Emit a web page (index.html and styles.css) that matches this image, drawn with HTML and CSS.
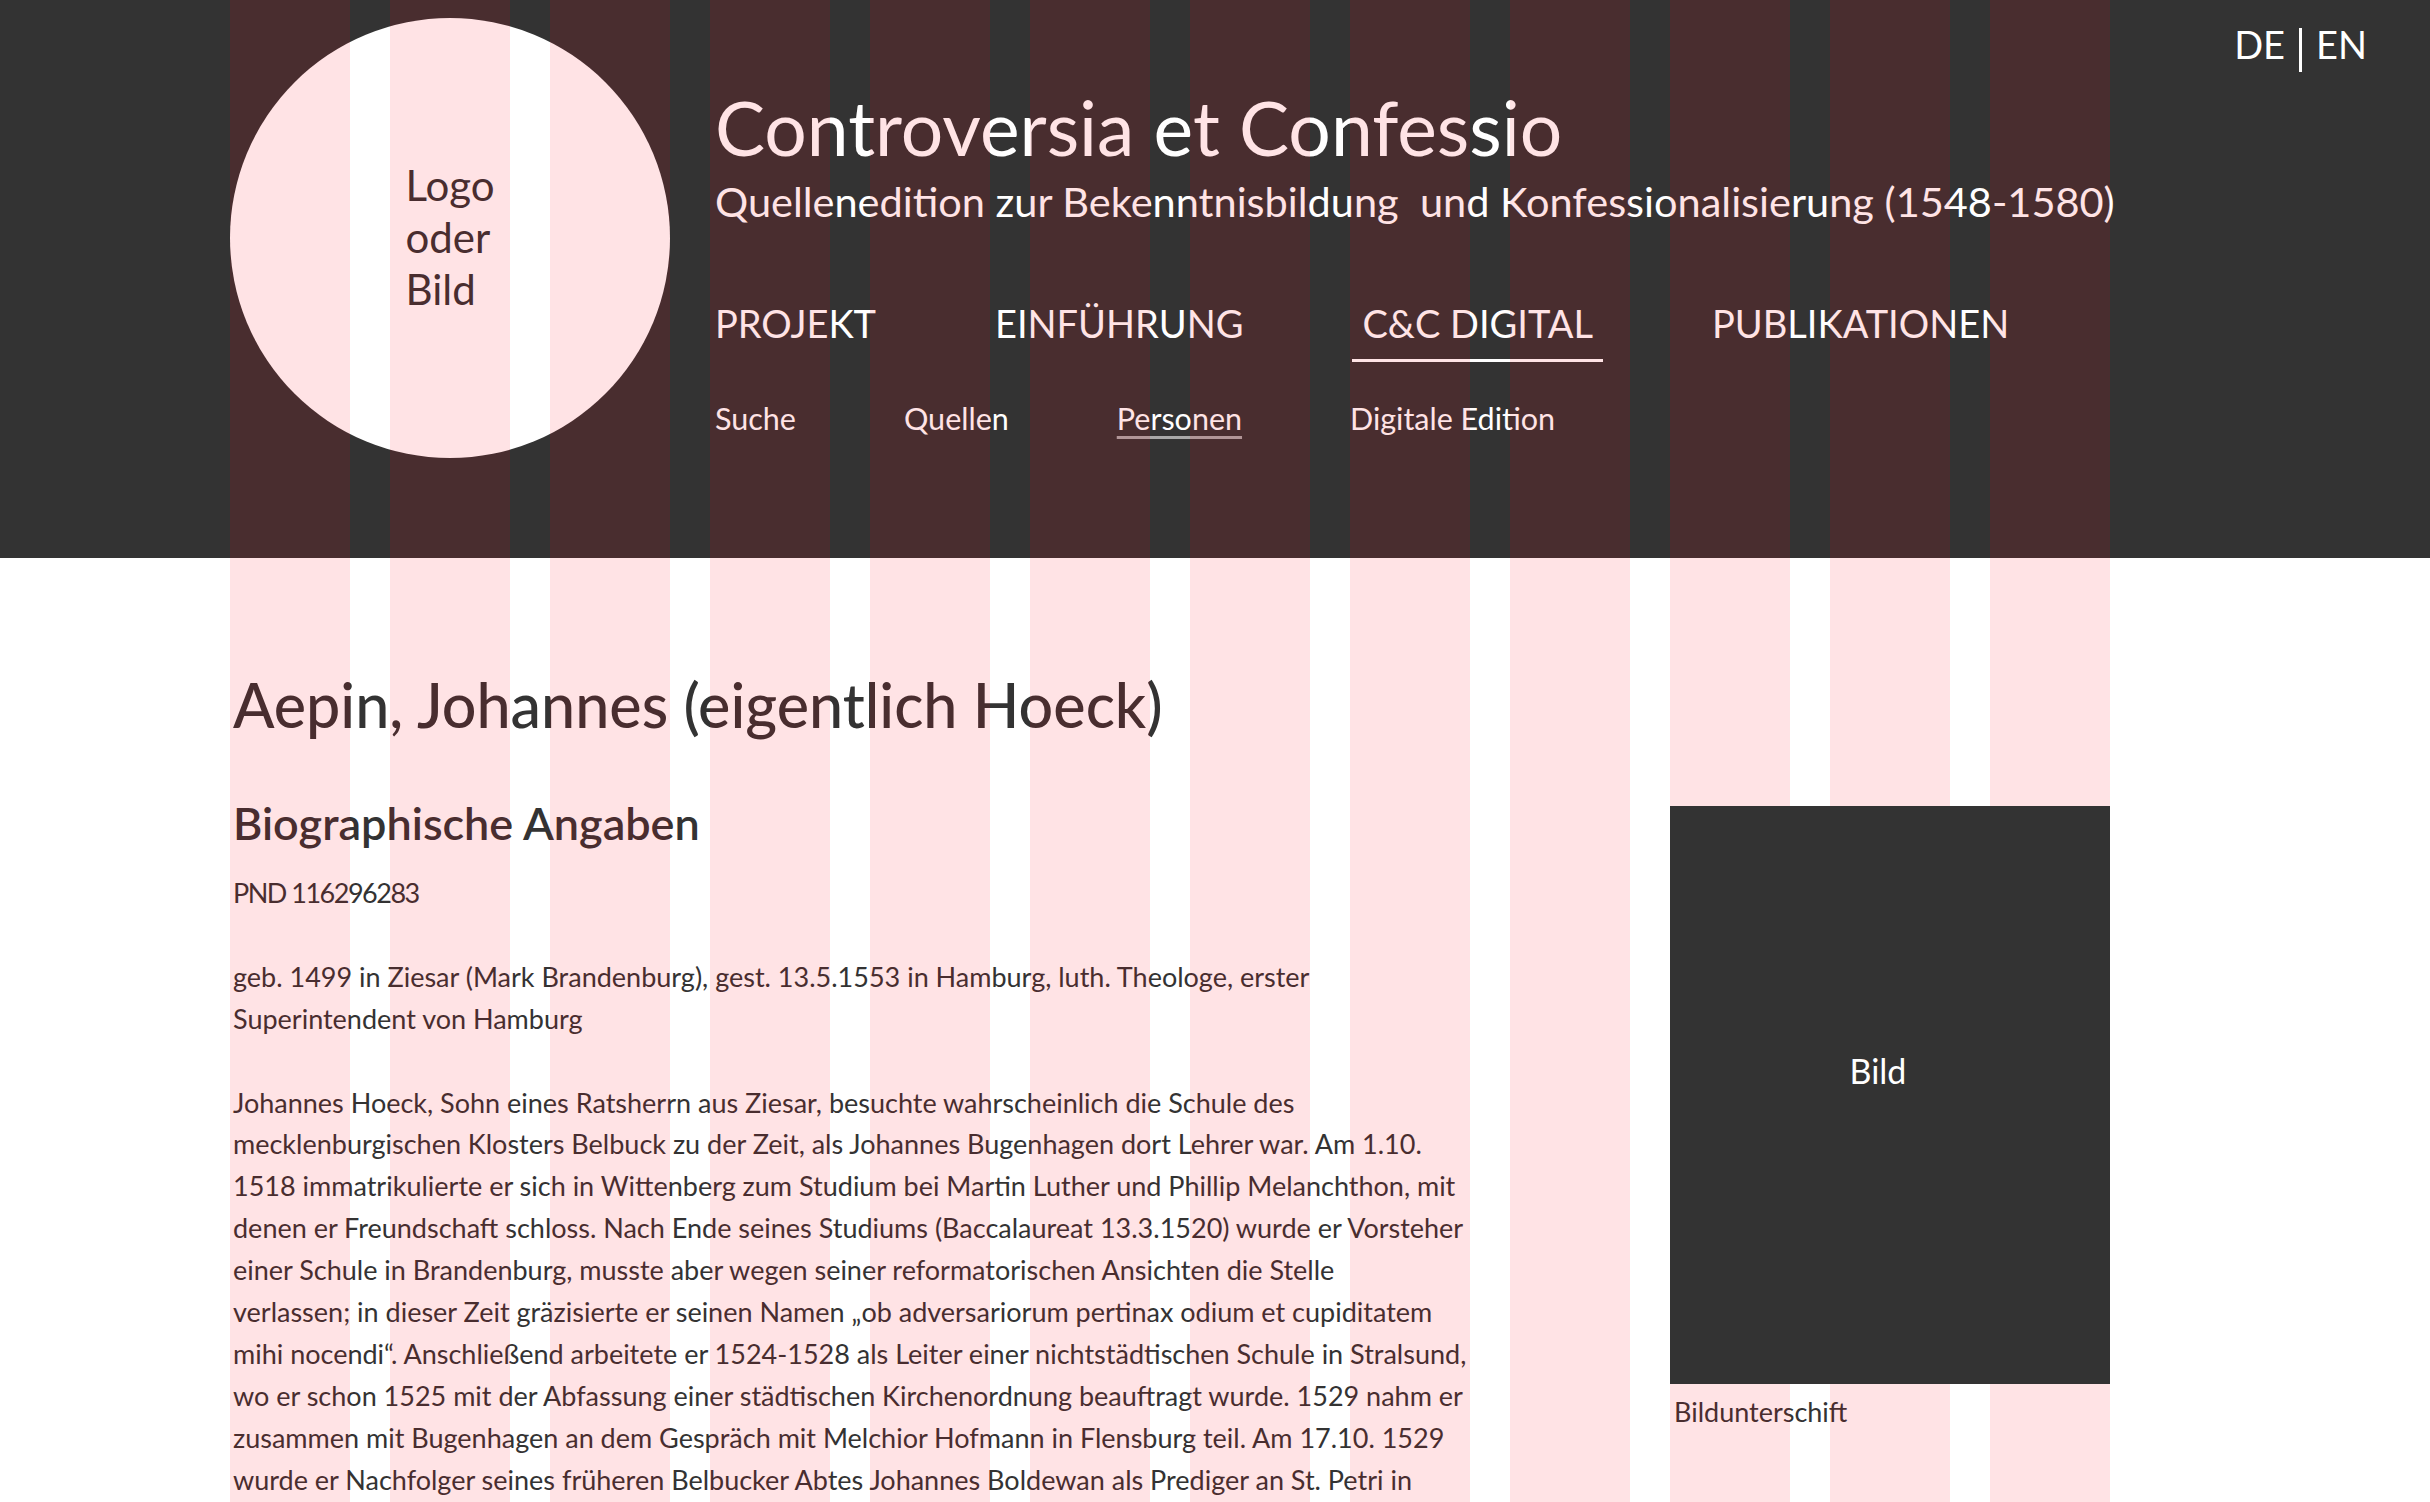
FILE: index.html
```html
<!DOCTYPE html>
<html lang="de">
<head>
<meta charset="utf-8">
<title>Aepin, Johannes – Controversia et Confessio</title>
<link rel="stylesheet" href="styles.css">
</head>
<body>
<div class="page">
  <header class="site-header">
    <div class="header-grid">
      <div class="logo"><span class="logo-text">Logo<br>oder<br>Bild</span></div>
      <div class="branding">
        <h1 class="site-title">Controversia et Confessio</h1>
        <p class="site-subtitle">Quellenedition zur Bekenntnisbildung&nbsp; und Konfessionalisierung (1548-1580)</p>
        <nav>
          <ul class="main-nav">
            <li><a href="#">PROJEKT</a></li>
            <li><a href="#">EINFÜHRUNG</a></li>
            <li><a href="#" class="active">C&amp;C DIGITAL</a></li>
            <li><a href="#">PUBLIKATIONEN</a></li>
          </ul>
          <ul class="sub-nav">
            <li><a href="#">Suche</a></li>
            <li><a href="#">Quellen</a></li>
            <li><a href="#" class="active">Personen</a></li>
            <li><a href="#">Digitale Edition</a></li>
          </ul>
        </nav>
      </div>
    </div>
    <div class="lang"><a href="#">DE</a><span class="lang-sep"></span><a href="#">EN</a></div>
  </header>

  <main class="content">
    <h1 class="person-name">Aepin, Johannes (eigentlich Hoeck)</h1>
    <article class="bio">
      <h2 class="section-title">Biographische Angaben</h2>
      <p class="pnd">PND 116296283</p>
      <p>geb. 1499 in Ziesar (Mark Brandenburg), gest. 13.5.1553 in Hamburg, luth. Theologe, erster<br>Superintendent von Hamburg</p>
      <p>Johannes Hoeck, Sohn eines Ratsherrn aus Ziesar, besuchte wahrscheinlich die Schule des<br>mecklenburgischen Klosters Belbuck zu der Zeit, als Johannes Bugenhagen dort Lehrer war. Am 1.10.<br>1518 immatrikulierte er sich in Wittenberg zum Studium bei Martin Luther und Phillip Melanchthon, mit<br>denen er Freundschaft schloss. Nach Ende seines Studiums (Baccalaureat 13.3.1520) wurde er Vorsteher<br>einer Schule in Brandenburg, musste aber wegen seiner reformatorischen Ansichten die Stelle<br>verlassen; in dieser Zeit gräzisierte er seinen Namen „ob adversariorum pertinax odium et cupiditatem<br>mihi nocendi“. Anschließend arbeitete er 1524-1528 als Leiter einer nichtstädtischen Schule in Stralsund,<br>wo er schon 1525 mit der Abfassung einer städtischen Kirchenordnung beauftragt wurde. 1529 nahm er<br>zusammen mit Bugenhagen an dem Gespräch mit Melchior Hofmann in Flensburg teil. Am 17.10. 1529<br>wurde er Nachfolger seines früheren Belbucker Abtes Johannes Boldewan als Prediger an St. Petri in<br>Hamburg.</p>
    </article>
    <aside class="figure">
      <div class="figure-box">Bild</div>
      <div class="figure-caption">Bildunterschift</div>
    </aside>
  </main>

  <div class="grid-overlay" aria-hidden="true">
    <div class="grid-col"></div><div class="grid-col"></div><div class="grid-col"></div>
    <div class="grid-col"></div><div class="grid-col"></div><div class="grid-col"></div>
    <div class="grid-col"></div><div class="grid-col"></div><div class="grid-col"></div>
    <div class="grid-col"></div><div class="grid-col"></div><div class="grid-col"></div>
  </div>
</div>
</body>
</html>
```

FILE: styles.css
```css
* { box-sizing: border-box; }

html, body {
  margin: 0;
  padding: 0;
}

body {
  font-family: Lato, "Open Sans", sans-serif;
  color: #333;
  background: #fff;
}

a {
  color: inherit;
  text-decoration: none;
}

ul {
  list-style: none;
  margin: 0;
  padding: 0;
}

.page {
  position: relative;
  min-height: 1502px;
  padding-bottom: 120px;
}

/* layout grid overlay */
.grid-overlay {
  position: absolute;
  top: 0;
  bottom: 0;
  left: 230px;
  width: 1880px;
  display: grid;
  grid-template-columns: repeat(12, 120px);
  column-gap: 40px;
  pointer-events: none;
  z-index: 10;
}

.grid-col {
  background: rgba(255, 0, 20, 0.11);
}

/* header */
.site-header {
  height: 558px;
  background: #333;
  color: #fff;
  display: flex;
  align-items: flex-start;
  padding-left: 230px;
  padding-right: 63px;
}

.header-grid {
  width: 1880px;
  flex: none;
  display: grid;
  grid-template-columns: repeat(12, 120px);
  column-gap: 40px;
  align-items: start;
}

.logo {
  grid-column: 1 / 4;
  margin-top: 18px;
  width: 440px;
  height: 440px;
  border-radius: 50%;
  background: #fff;
  color: #333;
  display: flex;
  align-items: center;
  justify-content: center;
  padding-bottom: 3px;
}

.logo-text {
  font-size: 42px;
  line-height: 52px;
  text-align: left;
}

.branding {
  grid-column: 4 / 13;
  padding-top: 82px;
  padding-left: 5px;
}

.site-title {
  margin: 0;
  font-size: 75px;
  line-height: 90px;
  font-weight: 400;
}

.site-subtitle {
  margin: 3px 0 0;
  font-size: 41.5px;
  line-height: 52px;
  white-space: nowrap;
}

.main-nav {
  display: flex;
  gap: 119px;
  margin-top: 73px;
}

.main-nav a {
  display: block;
  position: relative;
  font-size: 38px;
  line-height: 46px;
  padding-bottom: 16px;
}

.main-nav a.active::after {
  content: "";
  position: absolute;
  left: -10px;
  right: -10px;
  bottom: 0;
  height: 3px;
  background: #fff;
}

.sub-nav {
  display: flex;
  gap: 108px;
  margin-top: 38px;
}

.sub-nav a {
  display: block;
  font-size: 30.5px;
  line-height: 36px;
}

.sub-nav a.active {
  text-decoration: underline;
  text-decoration-color: #a8a8a8;
  text-decoration-thickness: 3px;
  text-underline-offset: 6px;
}

.lang {
  margin-left: auto;
  margin-top: 21px;
  display: flex;
  align-items: flex-start;
  font-size: 38px;
  line-height: 46px;
}

.lang-sep {
  width: 3px;
  height: 44px;
  margin: 7px 14px 0;
  background: #fff;
}

/* content */
.content {
  margin-left: 230px;
  width: 1880px;
  padding-top: 112px;
  display: grid;
  grid-template-columns: repeat(12, 120px);
  column-gap: 40px;
  align-items: start;
}

.person-name {
  grid-column: 1 / -1;
  margin: 0;
  padding-left: 3px;
  font-size: 61px;
  line-height: 70px;
  font-weight: 500;
}

.bio {
  grid-column: 1 / 9;
  padding-left: 3px;
}

.section-title {
  margin: 57px 0 0;
  font-size: 45px;
  line-height: 52px;
  font-weight: 600;
}

.bio p {
  margin: 0 0 41.9px;
  font-size: 27px;
  line-height: 41.9px;
  white-space: nowrap;
}

.bio .pnd {
  margin-top: 23px;
  letter-spacing: -1.5px;
}

.figure {
  grid-column: 10 / 13;
  margin-top: 66px;
}

.figure-box {
  position: relative;
  z-index: 11;
  height: 578px;
  background: #333;
  color: #fff;
  display: flex;
  align-items: center;
  justify-content: center;
  padding: 0 24px 50px 0;
  font-size: 34px;
}

.figure-caption {
  margin-top: 7px;
  padding-left: 4px;
  font-size: 27px;
  line-height: 41.9px;
}
```
